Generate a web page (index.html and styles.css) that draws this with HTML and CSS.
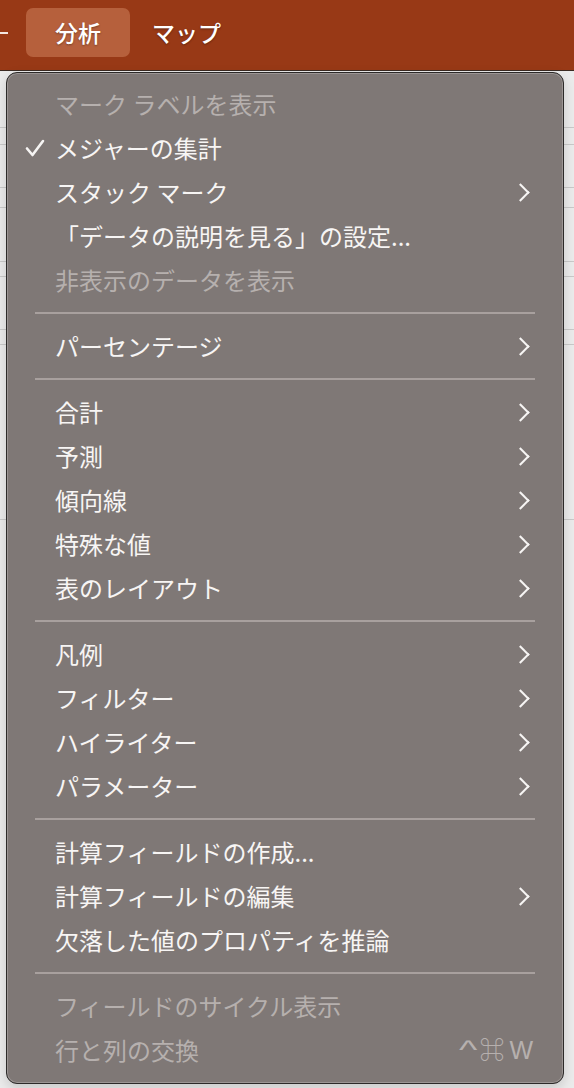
FILE: index.html
```html
<!DOCTYPE html>
<html lang="ja">
<head>
<meta charset="utf-8">
<link rel="stylesheet" href="styles.css">
</head>
<body>
<div class="menubar">
  <span class="mb-cut"></span>
  <span class="mb-item mb-active">分析</span>
  <span class="mb-item">マップ</span>
</div>
<div class="sheet">
  <div class="bgrow h56"></div>
  <div class="bgrow h16"></div>
  <div class="bgrow h42"></div>
  <div class="bgrow h19"></div>
  <div class="bgrow h53"></div>
  <div class="bgrow h14"></div>
  <div class="bgrow h52"></div>
  <div class="bgrow h14"></div>
  <div class="bgrow h174"></div>
</div>

<div class="menu">
  <div class="item disabled"><span class="label">マーク ラベルを表示</span></div>
  <div class="item"><span class="check"><svg width="20" height="18" viewBox="0 0 20 18"><path d="M2 9.5 L7.5 16 L18 2" fill="none" stroke="#f6f4f3" stroke-width="2.6" stroke-linecap="round" stroke-linejoin="round"/></svg></span><span class="label">メジャーの集計</span></div>
  <div class="item"><span class="label">スタック マーク</span><span class="chev"></span></div>
  <div class="item"><span class="label">「データの説明を見る」の設定...</span></div>
  <div class="item disabled"><span class="label">非表示のデータを表示</span></div>
  <div class="sep"></div>
  <div class="item"><span class="label">パーセンテージ</span><span class="chev"></span></div>
  <div class="sep"></div>
  <div class="item"><span class="label">合計</span><span class="chev"></span></div>
  <div class="item"><span class="label">予測</span><span class="chev"></span></div>
  <div class="item"><span class="label">傾向線</span><span class="chev"></span></div>
  <div class="item"><span class="label">特殊な値</span><span class="chev"></span></div>
  <div class="item"><span class="label">表のレイアウト</span><span class="chev"></span></div>
  <div class="sep"></div>
  <div class="item"><span class="label">凡例</span><span class="chev"></span></div>
  <div class="item"><span class="label">フィルター</span><span class="chev"></span></div>
  <div class="item"><span class="label">ハイライター</span><span class="chev"></span></div>
  <div class="item"><span class="label">パラメーター</span><span class="chev"></span></div>
  <div class="sep"></div>
  <div class="item"><span class="label">計算フィールドの作成...</span></div>
  <div class="item"><span class="label">計算フィールドの編集</span><span class="chev"></span></div>
  <div class="item"><span class="label">欠落した値のプロパティを推論</span></div>
  <div class="sep"></div>
  <div class="item disabled"><span class="label">フィールドのサイクル表示</span></div>
  <div class="item disabled"><span class="label">行と列の交換</span><span class="shortcut"><span class="sc-caret">^</span><span>⌘</span><span>W</span></span></div>
</div>
</body>
</html>
```
FILE: styles.css
```css
html, body {
  margin: 0;
  padding: 0;
}
body {
  width: 574px;
  height: 1088px;
  overflow: hidden;
  background: #ebebeb;
  font-family: "Noto Sans CJK JP", "Noto Sans", sans-serif;
  position: relative;
}
.menubar {
  height: 70px;
  background: #983916;
  border-bottom: 1px solid #3b2a22;
  display: flex;
  align-items: center;
  gap: 22px;
}
.mb-item {
  color: #fff;
  font-size: 23px;
  font-weight: 500;
  line-height: 49px;
  text-shadow: 0 1px 2px rgba(0,0,0,0.35);
}
.mb-cut {
  width: 8px;
  height: 2px;
  background: #f3e6e0;
  margin-right: -4px;
  margin-top: -5px;
}
.mb-active {
  background: #b6603c;
  border-radius: 7px;
  padding: 0 29px;
  height: 49px;
  margin-top: -5px;
}
.mb-active + .mb-item {
  margin-top: -5px;
}
.sheet {
  display: flex;
  flex-direction: column;
}
.bgrow {
  border-bottom: 1px solid #c9c9c9;
}
.h56 { height: 56px; }
.h16 { height: 16px; }
.h42 { height: 42px; }
.h19 { height: 19px; }
.h53 { height: 53px; }
.h14 { height: 14px; }
.h52 { height: 52px; }
.h174 { height: 174px; }

.menu {
  position: absolute;
  left: 6px;
  top: 72px;
  width: 556px;
  padding: 9px 0 11px;
  background: #7f7876;
  border: 1px solid #2c2a29;
  border-radius: 11px;
  box-shadow: inset 0 0 0 1px rgba(255,255,255,0.22), 0 4px 12px rgba(0,0,0,0.15);
}
.item {
  height: 44px;
  display: flex;
  align-items: center;
  position: relative;
  padding-left: 48px;
  padding-right: 30px;
  color: #f7f5f4;
  font-size: 24px;
  line-height: 44px;
}
.item.disabled {
  color: #b6b0ae;
}
.label {
  flex: 1;
  white-space: nowrap;
}
.check {
  position: absolute;
  left: 18px;
  top: 13px;
  width: 20px;
  height: 18px;
  display: block;
}
.check svg { display: block; }
.chev {
  width: 11px;
  height: 11px;
  border-right: 2.6px solid #f7f5f4;
  border-top: 2.6px solid #f7f5f4;
  transform: rotate(45deg);
  margin-right: 6px;
}
.shortcut {
  display: flex;
  gap: 5px;
  align-items: center;
  font-size: 25px;
  font-family: "Liberation Sans", "Noto Sans CJK JP", sans-serif;
}
.sc-caret {
  font-size: 26px;
  transform: scaleX(1.5);
}
.sep {
  height: 2px;
  margin: 10px 28px 10px 28px;
  background: #a8a09e;
}
```
